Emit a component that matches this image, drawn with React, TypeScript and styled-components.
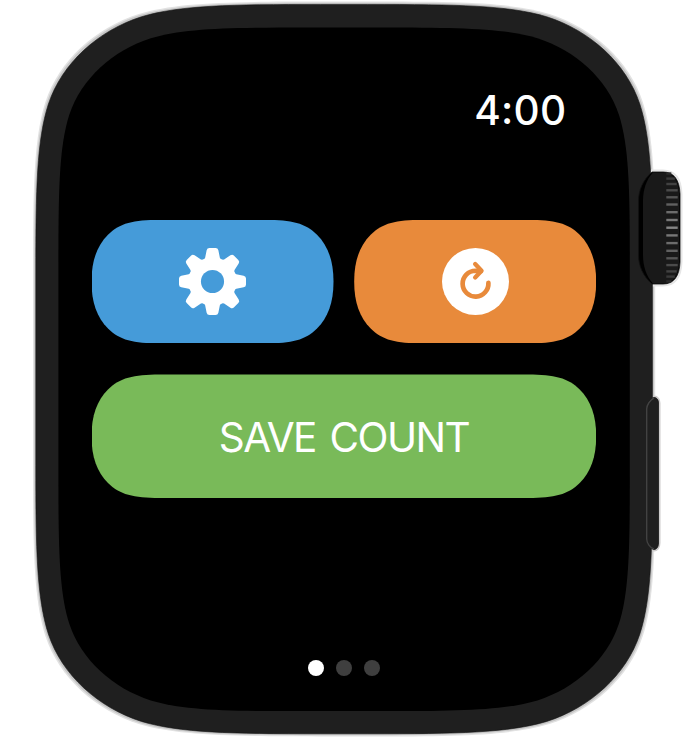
import React from "react";
import styled, { createGlobalStyle } from "styled-components";

type Point = [number, number];

/* Continuous-curvature rounded rectangle. `pts` holds the cubic segments of the
   top-left corner, from the left edge to the top edge; the others mirror it. */
const squircle = (x: number, y: number, w: number, h: number, pts: Point[]) => {
  const run = (mx: boolean, my: boolean, reverse: boolean) => {
    const p = (reverse ? [...pts].reverse() : pts).map(
      (q) => `${(mx ? x + w - q[0] : x + q[0]).toFixed(2)} ${(my ? y + h - q[1] : y + q[1]).toFixed(2)}`
    );
    let d = p[0];
    for (let i = 1; i < p.length; i += 3) d += ` C${p[i]} ${p[i + 1]} ${p[i + 2]}`;
    return d;
  };
  return `M${run(false, false, false)} L${run(true, false, true)} L${run(true, true, false)} L${run(false, true, true)} Z`;
};

const unitCorner: Point[] = [
  [0, 1.7], [0, 1.16], [0.006, 0.86], [0.07491, 0.63149],
  [0.155, 0.37282], [0.37282, 0.165], [0.63149, 0.078],
  [0.86, 0.006], [1.16, 0], [1.7, 0],
];
const cornerOf = (r: number): Point[] => unitCorner.map(([a, b]) => [a * r * 1.06, b * r]);

const caseCurve = cornerOf(158);
const screenCurve = cornerOf(138);
const buttonCurve: Point[] = [
  [0, 61.7], [0, 41], [5.5, 26], [16.5, 15], [28, 3.5], [42, 0], [68, 0],
];

const GlobalStyle = createGlobalStyle`
  html, body { margin: 0; background: #fff; }
  body { overflow: hidden; font-family: Inter, "Liberation Sans", sans-serif; }
`;

const Device = styled.main`
  position: relative;
  box-sizing: border-box;
  width: 693px;
  height: 738px;
  padding: 27px 0 0 58px;
`;

const Chassis = styled.svg`
  position: absolute;
  inset: 0;
`;

const Screen = styled.section`
  position: relative;
  box-sizing: border-box;
  display: flex;
  flex-direction: column;
  width: 572px;
  height: 684px;
  padding: 59px 33.5px 35px;
  background: #000;
  clip-path: path("${squircle(0.4, 0.4, 571.4, 683.8, screenCurve)}");
`;

const StatusBar = styled.header`
  display: flex;
  justify-content: flex-end;
  height: 50px;
  padding-right: 30px;
`;

const Clock = styled.time`
  color: #fff;
  font-size: 40.5px;
  font-weight: 500;
  line-height: 50px;
  letter-spacing: 0.3px;
`;

const Colon = styled.span`
  line-height: 0;
  vertical-align: 1px;
`;

const Actions = styled.div`
  display: grid;
  grid-template-columns: 242px 242px;
  column-gap: 20.7px;
  row-gap: 31px;
  margin-top: 83.8px;
`;

const Action = styled.button<{ $tone: string; $wide?: boolean }>`
  display: flex;
  align-items: center;
  justify-content: center;
  grid-column: ${(p) => (p.$wide ? "1 / -1" : "auto")};
  height: 123.6px;
  padding: 0;
  border: 0;
  color: #fff;
  background: ${(p) => p.$tone};
  clip-path: path("${(p) => squircle(0, 0, p.$wide ? 504.7 : 242, 123.6, buttonCurve)}");
`;

const Label = styled.span`
  padding-top: 4px;
  font-family: Inter, "Liberation Sans", sans-serif;
  font-size: 40.5px;
  line-height: 50px;
  letter-spacing: -1.6px;
  word-spacing: 4px;
  white-space: nowrap;
`;

const Pager = styled.nav`
  display: flex;
  justify-content: center;
  gap: 12.4px;
  margin-top: auto;
`;

const Dot = styled.span<{ $active?: boolean }>`
  width: 16px;
  height: 16px;
  border-radius: 50%;
  background: ${(p) => (p.$active ? "#fff" : "#3f3f3f")};
`;

const ridges: [number, string][] = [
  [173.5, "#2b2b2b"], [178.6, "#3a3a3a"], [184, "#414141"], [190.3, "#4a4a4a"],
  [197.3, "#555"], [204.5, "#606060"], [212.2, "#6c6c6c"], [220, "#777"],
  [227.7, "#858585"], [235.4, "#777"], [243.1, "#6c6c6c"], [250.8, "#606060"],
  [258.3, "#555"], [265.1, "#4a4a4a"], [271.4, "#414141"], [276.6, "#3a3a3a"], [281.4, "#2b2b2b"],
];

const crownPath =
  "M652 172 H663 C674 172 679.5 180 680 194 V262 C679.5 276 674 284 663 284 H652 C643 276 638.5 266 638.5 255 V201 C638.5 190 643 180 652 172 Z";
const sidePath =
  "M654 397.5 C657 397.5 658.5 400 658.5 403 V543 C658.5 547 656.5 549.5 654 549.5 C650 549 646.5 542 646.5 539 V409 C646.5 405 650 398 654 397.5 Z";

const WatchCase = () => (
  <Chassis width="693" height="738" viewBox="0 0 693 738" aria-hidden="true">
    <path d={squircle(33, 1.6, 622.2, 734.8, caseCurve)} fill="#e2e2e2" />
    <path d={squircle(34.2, 2.8, 619.8, 732.4, caseCurve)} fill="#c6c6c6" />
    <path d={crownPath} fill="none" stroke="#e6e6e6" strokeWidth="5" />
    <path d={sidePath} fill="none" stroke="#cecccc" strokeWidth="4" />
    <path d={squircle(35.8, 4.4, 616.6, 729.4, caseCurve)} fill="#1f1f1f" stroke="#111" strokeWidth="0.6" />
    <path d={crownPath} fill="#000" stroke="#111" strokeWidth="0.8" />
    <path
      d="M653 172.5 H663 C673 172.5 679 181 679 194 V262 C679 275 673 283.5 663 283.5 H653 C646 276 643 266 643 255 V201 C643 190 646 180 653 172.5 Z"
      fill="#191919"
    />
    {ridges.map(([y, color], i) => {
      const fromEnd = Math.min(i, ridges.length - 1 - i);
      const width = [5, 8.5, 10.4][fromEnd] ?? 11.4;
      return <rect key={y} x={666.3} y={y - 1.2} width={width} height={2.4} fill={color} />;
    })}
    <path d={sidePath} fill="#1f1f1f" stroke="#171717" strokeWidth="0.8" />
    <path
      d="M654 398 C650 400 646.7 405 646.7 409 V539 C646.7 543 650 548 654 549"
      fill="none" stroke="#424242" strokeWidth="1.4"
    />
  </Chassis>
);

const tooth =
  "M-31 -62 Q-25 -64 -22 -71 L-17.5 -93 Q-16 -100 -9 -100 H9 Q16 -100 17.5 -93 L22 -71 Q25 -64 31 -62 Z";

const Gear = () => (
  <svg width="67" height="67" viewBox="-100 -100 200 200" aria-hidden="true">
    <circle r="71.5" fill="#fff" />
    {[0, 45, 90, 135, 180, 225, 270, 315].map((angle) => (
      <path key={angle} d={tooth} fill="#fff" transform={`rotate(${angle})`} />
    ))}
    <circle r="34.5" fill="#459bd9" />
  </svg>
);

const Restart = () => (
  <svg width="67" height="67" viewBox="-100 -100 200 200" aria-hidden="true">
    <circle r="100" fill="#fff" />
    <g fill="none" stroke="#e88a3b" strokeWidth="14" strokeLinecap="round" strokeLinejoin="round">
      <path d="M38.5 4 A38.5 38.5 0 1 1 0 -32 L16 -31" />
      <path d="M-1 -52 L18 -32 L-1 -12" strokeWidth="13" />
    </g>
  </svg>
);

export default function App() {
  return (
    <>
      <GlobalStyle />
      <Device>
        <WatchCase />
        <Screen>
          <StatusBar>
            <Clock>
              4<Colon>:</Colon>00
            </Clock>
          </StatusBar>
          <Actions>
            <Action $tone="#459bd9" aria-label="Settings">
              <Gear />
            </Action>
            <Action $tone="#e88a3b" aria-label="Reset">
              <Restart />
            </Action>
            <Action $tone="#79ba59" $wide>
              <Label>SAVE COUNT</Label>
            </Action>
          </Actions>
          <Pager>
            <Dot $active />
            <Dot />
            <Dot />
          </Pager>
        </Screen>
      </Device>
    </>
  );
}
